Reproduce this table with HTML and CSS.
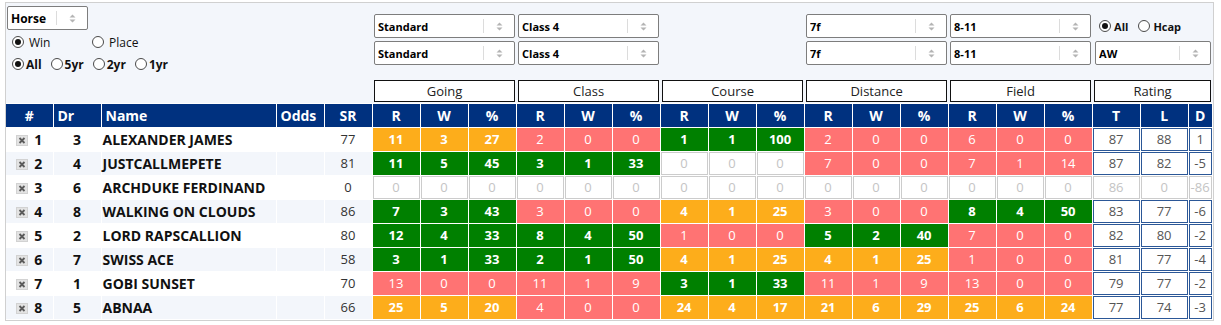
FILE: index.html
```html
<!DOCTYPE html>
<html>
<head>
<meta charset="utf-8">
<link rel="stylesheet" href="styles.css">
</head>
<body>
<div class="panel">
<table class="grid">
<colgroup>
<col class="c-num"><col class="c-dr"><col class="c-name"><col class="c-odds"><col class="c-sr">
<col class="c-st"><col class="c-st"><col class="c-st">
<col class="c-st"><col class="c-st"><col class="c-st">
<col class="c-st"><col class="c-st"><col class="c-st">
<col class="c-st"><col class="c-st"><col class="c-st">
<col class="c-st"><col class="c-st"><col class="c-st">
<col class="c-st"><col class="c-st"><col class="c-d">
</colgroup>
<thead>
<tr class="f1">
<td colspan="5" rowspan="2" class="controls">
<div class="sel sel-horse"><span class="val">Horse</span><span class="arr"><svg width="7" height="9" viewBox="0 0 7 9"><path d="M3.5 0.5L6.5 3.5H0.5Z M0.5 5.5H6.5L3.5 8.5Z" fill="#b4b4b4"/></svg></span></div>
<div class="radios r-win">
<label class="opt"><span class="radio on"></span>Win</label>
<label class="opt"><span class="radio"></span>Place</label>
</div>
<div class="radios r-period">
<label class="opt"><span class="radio on"></span>All</label>
<label class="opt"><span class="radio"></span>5yr</label>
<label class="opt"><span class="radio"></span>2yr</label>
<label class="opt"><span class="radio"></span>1yr</label>
</div>
</td>
<td colspan="3"><div class="sel"><span class="val">Standard</span><span class="arr"><svg width="7" height="9" viewBox="0 0 7 9"><path d="M3.5 0.5L6.5 3.5H0.5Z M0.5 5.5H6.5L3.5 8.5Z" fill="#b4b4b4"/></svg></span></div></td>
<td colspan="3"><div class="sel"><span class="val">Class 4</span><span class="arr"><svg width="7" height="9" viewBox="0 0 7 9"><path d="M3.5 0.5L6.5 3.5H0.5Z M0.5 5.5H6.5L3.5 8.5Z" fill="#b4b4b4"/></svg></span></div></td>
<td colspan="3"></td>
<td colspan="3"><div class="sel"><span class="val">7f</span><span class="arr"><svg width="7" height="9" viewBox="0 0 7 9"><path d="M3.5 0.5L6.5 3.5H0.5Z M0.5 5.5H6.5L3.5 8.5Z" fill="#b4b4b4"/></svg></span></div></td>
<td colspan="3"><div class="sel"><span class="val">8-11</span><span class="arr"><svg width="7" height="9" viewBox="0 0 7 9"><path d="M3.5 0.5L6.5 3.5H0.5Z M0.5 5.5H6.5L3.5 8.5Z" fill="#b4b4b4"/></svg></span></div></td>
<td colspan="3"><div class="radios r-type">
<label class="opt"><span class="radio on"></span>All</label>
<label class="opt"><span class="radio"></span>Hcap</label>
</div></td>
</tr>
<tr class="f2">
<td colspan="3"><div class="sel"><span class="val">Standard</span><span class="arr"><svg width="7" height="9" viewBox="0 0 7 9"><path d="M3.5 0.5L6.5 3.5H0.5Z M0.5 5.5H6.5L3.5 8.5Z" fill="#b4b4b4"/></svg></span></div></td>
<td colspan="3"><div class="sel"><span class="val">Class 4</span><span class="arr"><svg width="7" height="9" viewBox="0 0 7 9"><path d="M3.5 0.5L6.5 3.5H0.5Z M0.5 5.5H6.5L3.5 8.5Z" fill="#b4b4b4"/></svg></span></div></td>
<td colspan="3"></td>
<td colspan="3"><div class="sel"><span class="val">7f</span><span class="arr"><svg width="7" height="9" viewBox="0 0 7 9"><path d="M3.5 0.5L6.5 3.5H0.5Z M0.5 5.5H6.5L3.5 8.5Z" fill="#b4b4b4"/></svg></span></div></td>
<td colspan="3"><div class="sel"><span class="val">8-11</span><span class="arr"><svg width="7" height="9" viewBox="0 0 7 9"><path d="M3.5 0.5L6.5 3.5H0.5Z M0.5 5.5H6.5L3.5 8.5Z" fill="#b4b4b4"/></svg></span></div></td>
<td colspan="3"><div class="sel sel-aw"><span class="val">AW</span><span class="arr"><svg width="7" height="9" viewBox="0 0 7 9"><path d="M3.5 0.5L6.5 3.5H0.5Z M0.5 5.5H6.5L3.5 8.5Z" fill="#b4b4b4"/></svg></span></div></td>
</tr>
<tr class="groups">
<td colspan="5"></td>
<td colspan="3"><div class="grp">Going</div></td>
<td colspan="3"><div class="grp">Class</div></td>
<td colspan="3"><div class="grp">Course</div></td>
<td colspan="3"><div class="grp">Distance</div></td>
<td colspan="3"><div class="grp">Field</div></td>
<td colspan="3"><div class="grp">Rating</div></td>
</tr>
<tr class="cols">
<th>#</th><th class="l">Dr</th><th class="l">Name</th><th class="l">Odds</th><th>SR</th>
<th>R</th><th>W</th><th>%</th>
<th>R</th><th>W</th><th>%</th>
<th>R</th><th>W</th><th>%</th>
<th>R</th><th>W</th><th>%</th>
<th>R</th><th>W</th><th>%</th>
<th>T</th><th>L</th><th>D</th>
</tr>
</thead>
<tbody>
<tr>
<td class="info num"><span class="ico"><svg width="12" height="11" viewBox="0 0 12 11"><rect x="0.5" y="0.5" width="11" height="10" fill="#e3e3e3" stroke="#d2d2d2"/><path d="M3.5 3L8.5 8M8.5 3L3.5 8" stroke="#5a5a5a" stroke-width="1.8"/></svg></span>1</td>
<td class="info dr">3</td><td class="info name">ALEXANDER JAMES</td><td class="info"></td><td class="info sr">77</td>
<td class="o">11</td><td class="o">3</td><td class="o">27</td>
<td class="p">2</td><td class="p">0</td><td class="p">0</td>
<td class="g">1</td><td class="g">1</td><td class="g">100</td>
<td class="p">2</td><td class="p">0</td><td class="p">0</td>
<td class="p">6</td><td class="p">0</td><td class="p">0</td>
<td class="rt"><div class="box">87</div></td><td class="rt"><div class="box">88</div></td><td class="rt"><div class="box">1</div></td>
</tr>
<tr>
<td class="info num"><span class="ico"><svg width="12" height="11" viewBox="0 0 12 11"><rect x="0.5" y="0.5" width="11" height="10" fill="#e3e3e3" stroke="#d2d2d2"/><path d="M3.5 3L8.5 8M8.5 3L3.5 8" stroke="#5a5a5a" stroke-width="1.8"/></svg></span>2</td>
<td class="info dr">4</td><td class="info name">JUSTCALLMEPETE</td><td class="info"></td><td class="info sr">81</td>
<td class="g">11</td><td class="g">5</td><td class="g">45</td>
<td class="g">3</td><td class="g">1</td><td class="g">33</td>
<td class="z"><div class="box">0</div></td><td class="z"><div class="box">0</div></td><td class="z"><div class="box">0</div></td>
<td class="p">7</td><td class="p">0</td><td class="p">0</td>
<td class="p">7</td><td class="p">1</td><td class="p">14</td>
<td class="rt"><div class="box">87</div></td><td class="rt"><div class="box">82</div></td><td class="rt"><div class="box">-5</div></td>
</tr>
<tr>
<td class="info num"><span class="ico"><svg width="12" height="11" viewBox="0 0 12 11"><rect x="0.5" y="0.5" width="11" height="10" fill="#e3e3e3" stroke="#d2d2d2"/><path d="M3.5 3L8.5 8M8.5 3L3.5 8" stroke="#5a5a5a" stroke-width="1.8"/></svg></span>3</td>
<td class="info dr">6</td><td class="info name">ARCHDUKE FERDINAND</td><td class="info"></td><td class="info sr">0</td>
<td class="z"><div class="box">0</div></td><td class="z"><div class="box">0</div></td><td class="z"><div class="box">0</div></td>
<td class="z"><div class="box">0</div></td><td class="z"><div class="box">0</div></td><td class="z"><div class="box">0</div></td>
<td class="z"><div class="box">0</div></td><td class="z"><div class="box">0</div></td><td class="z"><div class="box">0</div></td>
<td class="z"><div class="box">0</div></td><td class="z"><div class="box">0</div></td><td class="z"><div class="box">0</div></td>
<td class="z"><div class="box">0</div></td><td class="z"><div class="box">0</div></td><td class="z"><div class="box">0</div></td>
<td class="z"><div class="box">86</div></td><td class="z"><div class="box">0</div></td><td class="z"><div class="box">-86</div></td>
</tr>
<tr>
<td class="info num"><span class="ico"><svg width="12" height="11" viewBox="0 0 12 11"><rect x="0.5" y="0.5" width="11" height="10" fill="#e3e3e3" stroke="#d2d2d2"/><path d="M3.5 3L8.5 8M8.5 3L3.5 8" stroke="#5a5a5a" stroke-width="1.8"/></svg></span>4</td>
<td class="info dr">8</td><td class="info name">WALKING ON CLOUDS</td><td class="info"></td><td class="info sr">86</td>
<td class="g">7</td><td class="g">3</td><td class="g">43</td>
<td class="p">3</td><td class="p">0</td><td class="p">0</td>
<td class="o">4</td><td class="o">1</td><td class="o">25</td>
<td class="p">3</td><td class="p">0</td><td class="p">0</td>
<td class="g">8</td><td class="g">4</td><td class="g">50</td>
<td class="rt"><div class="box">83</div></td><td class="rt"><div class="box">77</div></td><td class="rt"><div class="box">-6</div></td>
</tr>
<tr>
<td class="info num"><span class="ico"><svg width="12" height="11" viewBox="0 0 12 11"><rect x="0.5" y="0.5" width="11" height="10" fill="#e3e3e3" stroke="#d2d2d2"/><path d="M3.5 3L8.5 8M8.5 3L3.5 8" stroke="#5a5a5a" stroke-width="1.8"/></svg></span>5</td>
<td class="info dr">2</td><td class="info name">LORD RAPSCALLION</td><td class="info"></td><td class="info sr">80</td>
<td class="g">12</td><td class="g">4</td><td class="g">33</td>
<td class="g">8</td><td class="g">4</td><td class="g">50</td>
<td class="p">1</td><td class="p">0</td><td class="p">0</td>
<td class="g">5</td><td class="g">2</td><td class="g">40</td>
<td class="p">7</td><td class="p">0</td><td class="p">0</td>
<td class="rt"><div class="box">82</div></td><td class="rt"><div class="box">80</div></td><td class="rt"><div class="box">-2</div></td>
</tr>
<tr>
<td class="info num"><span class="ico"><svg width="12" height="11" viewBox="0 0 12 11"><rect x="0.5" y="0.5" width="11" height="10" fill="#e3e3e3" stroke="#d2d2d2"/><path d="M3.5 3L8.5 8M8.5 3L3.5 8" stroke="#5a5a5a" stroke-width="1.8"/></svg></span>6</td>
<td class="info dr">7</td><td class="info name">SWISS ACE</td><td class="info"></td><td class="info sr">58</td>
<td class="g">3</td><td class="g">1</td><td class="g">33</td>
<td class="g">2</td><td class="g">1</td><td class="g">50</td>
<td class="o">4</td><td class="o">1</td><td class="o">25</td>
<td class="o">4</td><td class="o">1</td><td class="o">25</td>
<td class="p">1</td><td class="p">0</td><td class="p">0</td>
<td class="rt"><div class="box">81</div></td><td class="rt"><div class="box">77</div></td><td class="rt"><div class="box">-4</div></td>
</tr>
<tr>
<td class="info num"><span class="ico"><svg width="12" height="11" viewBox="0 0 12 11"><rect x="0.5" y="0.5" width="11" height="10" fill="#e3e3e3" stroke="#d2d2d2"/><path d="M3.5 3L8.5 8M8.5 3L3.5 8" stroke="#5a5a5a" stroke-width="1.8"/></svg></span>7</td>
<td class="info dr">1</td><td class="info name">GOBI SUNSET</td><td class="info"></td><td class="info sr">70</td>
<td class="p">13</td><td class="p">0</td><td class="p">0</td>
<td class="p">11</td><td class="p">1</td><td class="p">9</td>
<td class="g">3</td><td class="g">1</td><td class="g">33</td>
<td class="p">11</td><td class="p">1</td><td class="p">9</td>
<td class="p">13</td><td class="p">0</td><td class="p">0</td>
<td class="rt"><div class="box">79</div></td><td class="rt"><div class="box">77</div></td><td class="rt"><div class="box">-2</div></td>
</tr>
<tr>
<td class="info num"><span class="ico"><svg width="12" height="11" viewBox="0 0 12 11"><rect x="0.5" y="0.5" width="11" height="10" fill="#e3e3e3" stroke="#d2d2d2"/><path d="M3.5 3L8.5 8M8.5 3L3.5 8" stroke="#5a5a5a" stroke-width="1.8"/></svg></span>8</td>
<td class="info dr">5</td><td class="info name">ABNAA</td><td class="info"></td><td class="info sr">66</td>
<td class="o">25</td><td class="o">5</td><td class="o">20</td>
<td class="p">4</td><td class="p">0</td><td class="p">0</td>
<td class="o">24</td><td class="o">4</td><td class="o">17</td>
<td class="o">21</td><td class="o">6</td><td class="o">29</td>
<td class="o">25</td><td class="o">6</td><td class="o">24</td>
<td class="rt"><div class="box">77</div></td><td class="rt"><div class="box">74</div></td><td class="rt"><div class="box">-3</div></td>
</tr>
</tbody>
</table>
</div>
</body>
</html>
```
FILE: styles.css
```css
body {
  margin: 2px 0 0 5px;
  font-family: "Open Sans", sans-serif;
  color: #111;
  background: #fff;
}
.panel {
  width: 1207px;
  border: 1px solid #d0d0d0;
  background: #f3f6fb;
}
.grid {
  width: 1206px;
  table-layout: fixed;
  border-collapse: collapse;
}
.c-num { width: 47px; }
.c-dr { width: 48px; }
.c-name { width: 175px; }
.c-odds { width: 48px; }
.c-sr { width: 48px; }
.c-st { width: 48px; }
.c-d { width: 24px; }

.f1 td, .f2 td, .groups td {
  border: none;
  padding: 0;
}
.f1 { height: 36px; }
.f1 td { vertical-align: bottom; padding-bottom: 1px; }
.f1 td.controls { vertical-align: top; padding: 3px 0 0 1px; }
.f2 { height: 36px; }
.f2 td { vertical-align: top; padding-top: 2px; }
.groups { height: 28px; }
.groups td { vertical-align: top; padding-top: 5px; }

.sel {
  display: flex;
  align-items: center;
  height: 24px;
  box-sizing: border-box;
  margin: 0 1px 0 2px;
  border: 1px solid #7d7d7d;
  border-radius: 2px;
  background: #fff;
  padding-left: 3px;
  font-size: 11px;
  font-weight: 700;
  color: #000;
}
.sel-horse { width: 81px; margin: 0; font-size: 12px; }
.sel-aw { margin-left: 3px; }
.sel .val { flex: 1; white-space: nowrap; overflow: hidden; }
.sel .arr {
  flex: none;
  width: 30px;
  height: 14px;
  border-left: 1px solid #dcdcdc;
  display: flex;
  align-items: center;
  justify-content: center;
}

.radios { display: flex; align-items: center; }
.opt { display: inline-flex; align-items: center; }
.radio {
  width: 12px;
  height: 12px;
  box-sizing: border-box;
  border: 1px solid #4a4a4a;
  border-radius: 50%;
  background: #fff;
  display: inline-flex;
  align-items: center;
  justify-content: center;
}
.radio.on::after {
  content: "";
  width: 6px;
  height: 6px;
  border-radius: 50%;
  background: #111;
}
.r-win { height: 24px; padding-left: 5px; font-size: 12px; }
.r-win .opt { gap: 5px; }
.r-win .opt:first-child { width: 80px; }
.r-period { height: 20px; padding-left: 5px; font-size: 12px; font-weight: 700; }
.r-period .opt { gap: 2px; margin-right: 9px; }
.r-type { height: 24px; padding-left: 7px; font-size: 11px; font-weight: 700; }
.r-type .opt { gap: 3px; margin-right: 10px; }

.grp {
  margin: 0 1px 0 2px;
  height: 22px;
  box-sizing: border-box;
  border: 1px solid #111;
  background: #fff;
  text-align: center;
  font-size: 13px;
  line-height: 20px;
  color: #222;
}

.cols { height: 24px; }
.cols th {
  background: #00317f;
  color: #fff;
  font-size: 14px;
  font-weight: 700;
  border: 1px solid #fff;
  padding: 0;
  text-align: center;
}
.cols th.l { text-align: left; padding-left: 4px; }
.cols th:first-child { border-left: none; }

tbody tr { height: 24px; }
tbody td {
  border: 1px solid #fff;
  padding: 0;
  text-align: center;
  font-size: 13px;
  background: #fff;
  white-space: nowrap;
}
tbody td:first-child { border-left: none; }
tbody tr:nth-child(even) td.info { background: #f3f6fb; }
.num { font-size: 14px; font-weight: 700; }
.ico { display: inline-block; vertical-align: -1px; margin-right: 6px; line-height: 0; }
.dr { font-size: 14px; font-weight: 700; }
.name { text-align: left; padding-left: 1px; font-size: 14px; font-weight: 700; }
.sr { color: #333; }
td.o { background: #fdad1b; color: #fff; font-weight: 700; }
td.g { background: #008000; color: #fff; font-weight: 700; }
td.p { background: #ff7373; color: #fff; }
.box {
  height: 23px;
  box-sizing: border-box;
  border: 1px solid;
  line-height: 21px;
  background: #fff;
  overflow: visible;
}
.z .box { border-color: #cccccc; color: #c4c4c4; }
.rt .box { border-color: #2b5797; color: #555; }
```
